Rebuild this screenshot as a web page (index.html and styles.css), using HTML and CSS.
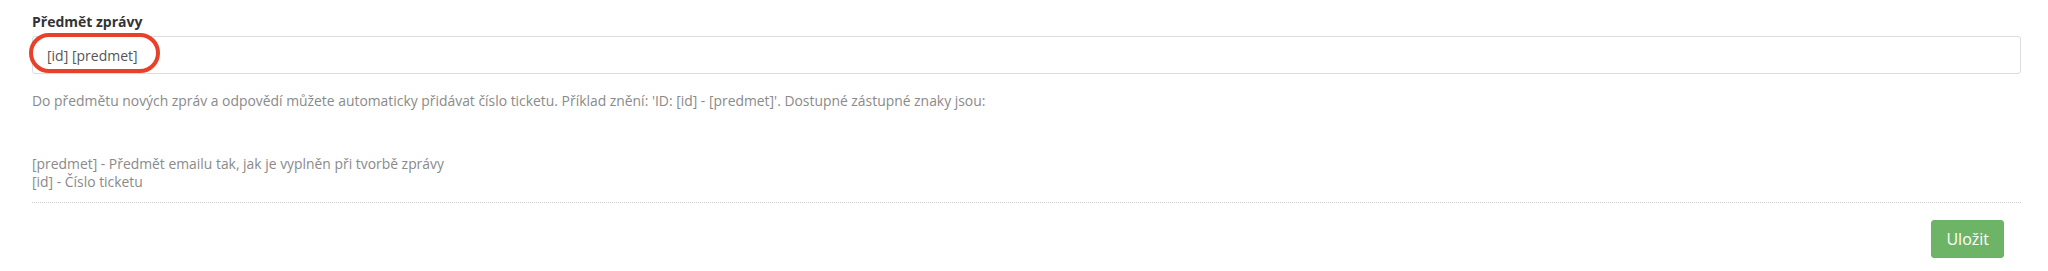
FILE: index.html
```html
<!DOCTYPE html>
<html lang="cs">
<head>
<meta charset="utf-8">
<title>Předmět zprávy</title>
<link rel="stylesheet" href="styles.css">
</head>
<body>
<form class="form">
  <div class="field">
    <label class="label" for="subject">Předmět zprávy</label>
    <div class="input-wrap">
      <input id="subject" class="input" type="text" value="[id] [predmet]">
      <span class="highlight"></span>
    </div>
    <p class="help">Do předmětu nových zpráv a odpovědí můžete automaticky přidávat číslo ticketu. Příklad znění: 'ID: [id] - [predmet]'. Dostupné zástupné znaky jsou:</p>
    <p class="help help-list">[predmet] - Předmět emailu tak, jak je vyplněn při tvorbě zprávy<br>[id] - Číslo ticketu</p>
  </div>
  <div class="actions">
    <button type="button" class="btn-save">Uložit</button>
  </div>
</form>
</body>
</html>
```
FILE: styles.css
```css
html, body {
  margin: 0;
  padding: 0;
  background: #ffffff;
}
body {
  font-family: "Open Sans", "Noto Sans", sans-serif;
  color: #333333;
}
.form {
  padding: 12px 27px 0 32px;
}
.field {
  border-bottom: 1px dotted #cfcfcf;
  padding-bottom: 10px;
}
.label {
  display: block;
  font-size: 14px;
  line-height: 20px;
  font-weight: 700;
  color: #333333;
  margin-bottom: 4px;
}
.input-wrap {
  position: relative;
}
.input {
  display: block;
  box-sizing: border-box;
  width: 100%;
  height: 38px;
  padding: 0 14px;
  border: 1px solid #dddddd;
  border-radius: 3px;
  font-family: "Open Sans", "Noto Sans", sans-serif;
  font-size: 14px;
  color: #555555;
  background: #ffffff;
  outline: none;
}
.highlight {
  position: absolute;
  left: -3px;
  top: -3px;
  width: 131px;
  height: 40px;
  box-sizing: border-box;
  border: 4px solid #e8412a;
  border-radius: 20px;
  pointer-events: none;
}
.help {
  margin: 18px 0 0;
  font-size: 13.9px;
  line-height: 18.6px;
  color: #8a8a8a;
}
.help-list {
  margin-top: 44px;
}
.actions {
  display: flex;
  justify-content: flex-end;
  padding: 17px 17px 0 0;
}
.btn-save {
  height: 38px;
  padding: 0 14px;
  border: 1px solid #6ab163;
  border-radius: 3px;
  background: #6eb467;
  color: #ffffff;
  font-family: "Open Sans", "Noto Sans", sans-serif;
  font-size: 16px;
  cursor: pointer;
}
```
